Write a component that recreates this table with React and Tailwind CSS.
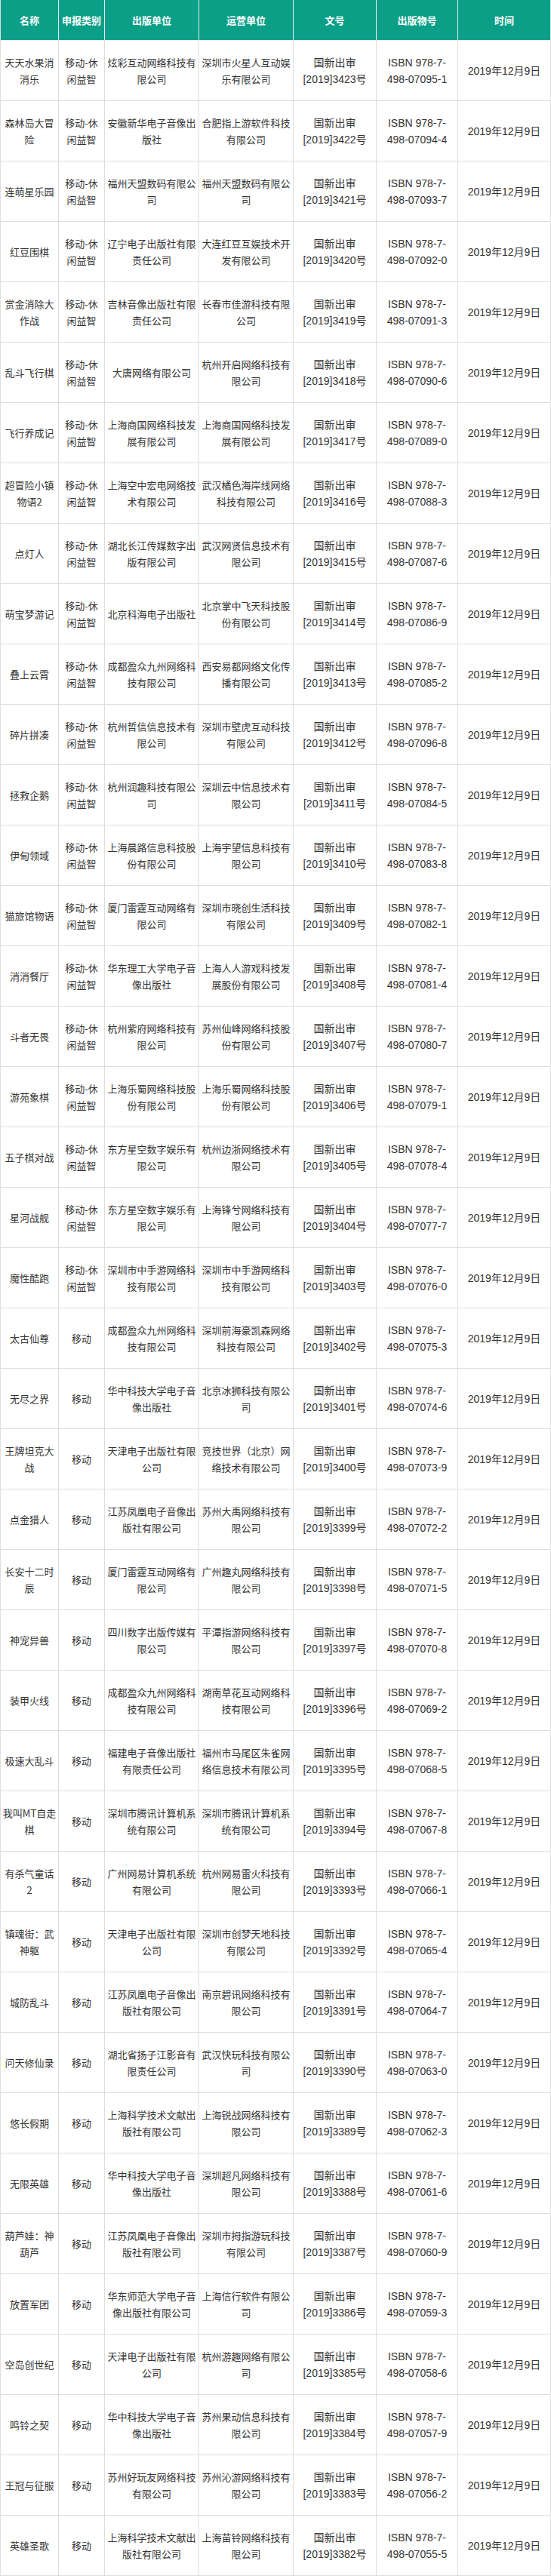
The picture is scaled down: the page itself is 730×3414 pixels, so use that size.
import React from 'react';

// ============================================================================
// 1. DONNÉES DU TABLEAU
// ============================================================================
// [名称, 休闲益智?, 出版单位, 运营单位, 出版物号 suffix]
const ROWS = [
  ['天天水果消消乐', 1, '炫彩互动网络科技有限公司', '深圳市火星人互动娱乐有限公司', '07095-1'],
  ['森林岛大冒险', 1, '安徽新华电子音像出版社', '合肥指上游软件科技有限公司', '07094-4'],
  ['连萌星乐园', 1, '福州天盟数码有限公司', '福州天盟数码有限公司', '07093-7'],
  ['红豆围棋', 1, '辽宁电子出版社有限责任公司', '大连红豆互娱技术开发有限公司', '07092-0'],
  ['赏金消除大作战', 1, '吉林音像出版社有限责任公司', '长春市佳游科技有限公司', '07091-3'],
  ['乱斗飞行棋', 1, '大唐网络有限公司', '杭州开启网络科技有限公司', '07090-6'],
  ['飞行养成记', 1, '上海商国网络科技发展有限公司', '上海商国网络科技发展有限公司', '07089-0'],
  ['超冒险小镇物语2', 1, '上海空中宏电网络技术有限公司', '武汉橘色海岸线网络科技有限公司', '07088-3'],
  ['点灯人', 1, '湖北长江传媒数字出版有限公司', '武汉网贤信息技术有限公司', '07087-6'],
  ['萌宝梦游记', 1, '北京科海电子出版社', '北京掌中飞天科技股份有限公司', '07086-9'],
  ['叠上云霄', 1, '成都盈众九州网络科技有限公司', '西安易都网络文化传播有限公司', '07085-2'],
  ['碎片拼凑', 1, '杭州哲信信息技术有限公司', '深圳市壁虎互动科技有限公司', '07096-8'],
  ['拯救企鹅', 1, '杭州润趣科技有限公司', '深圳云中信息技术有限公司', '07084-5'],
  ['伊甸领域', 1, '上海晨路信息科技股份有限公司', '上海宇望信息科技有限公司', '07083-8'],
  ['猫旅馆物语', 1, '厦门雷霆互动网络有限公司', '深圳市晓创生活科技有限公司', '07082-1'],
  ['消消餐厅', 1, '华东理工大学电子音像出版社', '上海人人游戏科技发展股份有限公司', '07081-4'],
  ['斗者无畏', 1, '杭州紫府网络科技有限公司', '苏州仙峰网络科技股份有限公司', '07080-7'],
  ['游苑象棋', 1, '上海乐蜀网络科技股份有限公司', '上海乐蜀网络科技股份有限公司', '07079-1'],
  ['五子棋对战', 1, '东方星空数字娱乐有限公司', '杭州边浙网络技术有限公司', '07078-4'],
  ['星河战舰', 1, '东方星空数字娱乐有限公司', '上海锋兮网络科技有限公司', '07077-7'],
  ['魔性酷跑', 1, '深圳市中手游网络科技有限公司', '深圳市中手游网络科技有限公司', '07076-0'],
  ['太古仙尊', 0, '成都盈众九州网络科技有限公司', '深圳前海豪凯森网络科技有限公司', '07075-3'],
  ['无尽之界', 0, '华中科技大学电子音像出版社', '北京冰狮科技有限公司', '07074-6'],
  ['王牌坦克大战', 0, '天津电子出版社有限公司', '竞技世界（北京）网络技术有限公司', '07073-9'],
  ['点金猎人', 0, '江苏凤凰电子音像出版社有限公司', '苏州大禹网络科技有限公司', '07072-2'],
  ['长安十二时辰', 0, '厦门雷霆互动网络有限公司', '广州趣丸网络科技有限公司', '07071-5'],
  ['神宠异兽', 0, '四川数字出版传媒有限公司', '平潭指游网络科技有限公司', '07070-8'],
  ['装甲火线', 0, '成都盈众九州网络科技有限公司', '湖南草花互动网络科技有限公司', '07069-2'],
  ['极速大乱斗', 0, '福建电子音像出版社有限责任公司', '福州市马尾区朱雀网络信息技术有限公司', '07068-5'],
  ['我叫MT自走\n棋', 0, '深圳市腾讯计算机系统有限公司', '深圳市腾讯计算机系统有限公司', '07067-8'],
  ['有杀气童话2', 0, '广州网易计算机系统有限公司', '杭州网易雷火科技有限公司', '07066-1'],
  ['镇魂街：武神躯', 0, '天津电子出版社有限公司', '深圳市创梦天地科技有限公司', '07065-4'],
  ['城防乱斗', 0, '江苏凤凰电子音像出版社有限公司', '南京碧讯网络科技有限公司', '07064-7'],
  ['问天修仙录', 0, '湖北省扬子江影音有限责任公司', '武汉快玩科技有限公司', '07063-0'],
  ['悠长假期', 0, '上海科学技术文献出版社有限公司', '上海锐战网络科技有限公司', '07062-3'],
  ['无限英雄', 0, '华中科技大学电子音像出版社', '深圳超凡网络科技有限公司', '07061-6'],
  ['葫芦娃：神葫芦', 0, '江苏凤凰电子音像出版社有限公司', '深圳市拇指游玩科技有限公司', '07060-9'],
  ['放置军团', 0, '华东师范大学电子音像出版社有限公司', '上海信行软件有限公司', '07059-3'],
  ['空岛创世纪', 0, '天津电子出版社有限公司', '杭州游趣网络有限公司', '07058-6'],
  ['鸣铃之契', 0, '华中科技大学电子音像出版社', '苏州果动信息科技有限公司', '07057-9'],
  ['王冠与征服', 0, '苏州好玩友网络科技有限公司', '苏州沁游网络科技有限公司', '07056-2'],
  ['英雄圣歌', 0, '上海科学技术文献出版社有限公司', '上海苗铃网络科技有限公司', '07055-5'],
];

const HEADERS = ['名称', '申报类别', '出版单位', '运营单位', '文号', '出版物号', '时间'];

const GRID = 'grid grid-cols-[77px_61px_125px_125px_110px_108px_123px]';

// ============================================================================
// 2. OUTILS
// ============================================================================
// coupe le texte en lignes de n caractères (ou sur \n si présent)
const chunk = (s, n) => {
  if (s.includes('\n')) return s.split('\n');
  const chars = Array.from(s);
  const out = [];
  for (let i = 0; i < chars.length; i += n) out.push(chars.slice(i, i + n).join(''));
  return out;
};

const Cell = ({ lines, latin }) => (
  <div
    className={`flex flex-col items-center justify-center text-center border-r border-b border-[#dedede] text-[#333] leading-[22px] ${latin ? 'text-[14px] font-[family-name:"Liberation_Sans","Noto_Sans_CJK_SC",sans-serif]' : 'text-[13px] font-[family-name:"Noto_Sans_CJK_SC",sans-serif]'}`}
  >
    {lines.map((l, i) => (
      <div key={i} className="whitespace-nowrap">{l}</div>
    ))}
  </div>
);

// ============================================================================
// 3. COMPOSANT
// ============================================================================
export default function App() {
  return (
    <div className='w-[730px] bg-white border-l border-[#dedede] font-[family-name:"Noto_Sans_CJK_SC",sans-serif]'>
      <div className={`${GRID} h-[54px] bg-[#0c9f88]`}>
        {HEADERS.map((h) => (
          <div
            key={h}
            className="flex items-center justify-center border-r border-b border-[#e3ece9] text-white text-[13px] font-bold whitespace-nowrap"
          >
            {h}
          </div>
        ))}
      </div>

      {ROWS.map(([name, casual, pub, op, isbn], i) => (
        <div key={i} className={`${GRID} h-[80px]`}>
          <Cell lines={chunk(name, 5)} />
          <Cell lines={chunk(casual ? '移动-休闲益智' : '移动', 4)} />
          <Cell lines={chunk(pub, 9)} />
          <Cell lines={chunk(op, 9)} />
          <Cell latin lines={['国新出审', `[2019]${3423 - i}号`]} />
          <Cell latin lines={['ISBN 978-7-', `498-${isbn}`]} />
          <Cell latin lines={['2019年12月9日']} />
        </div>
      ))}
    </div>
  );
}
